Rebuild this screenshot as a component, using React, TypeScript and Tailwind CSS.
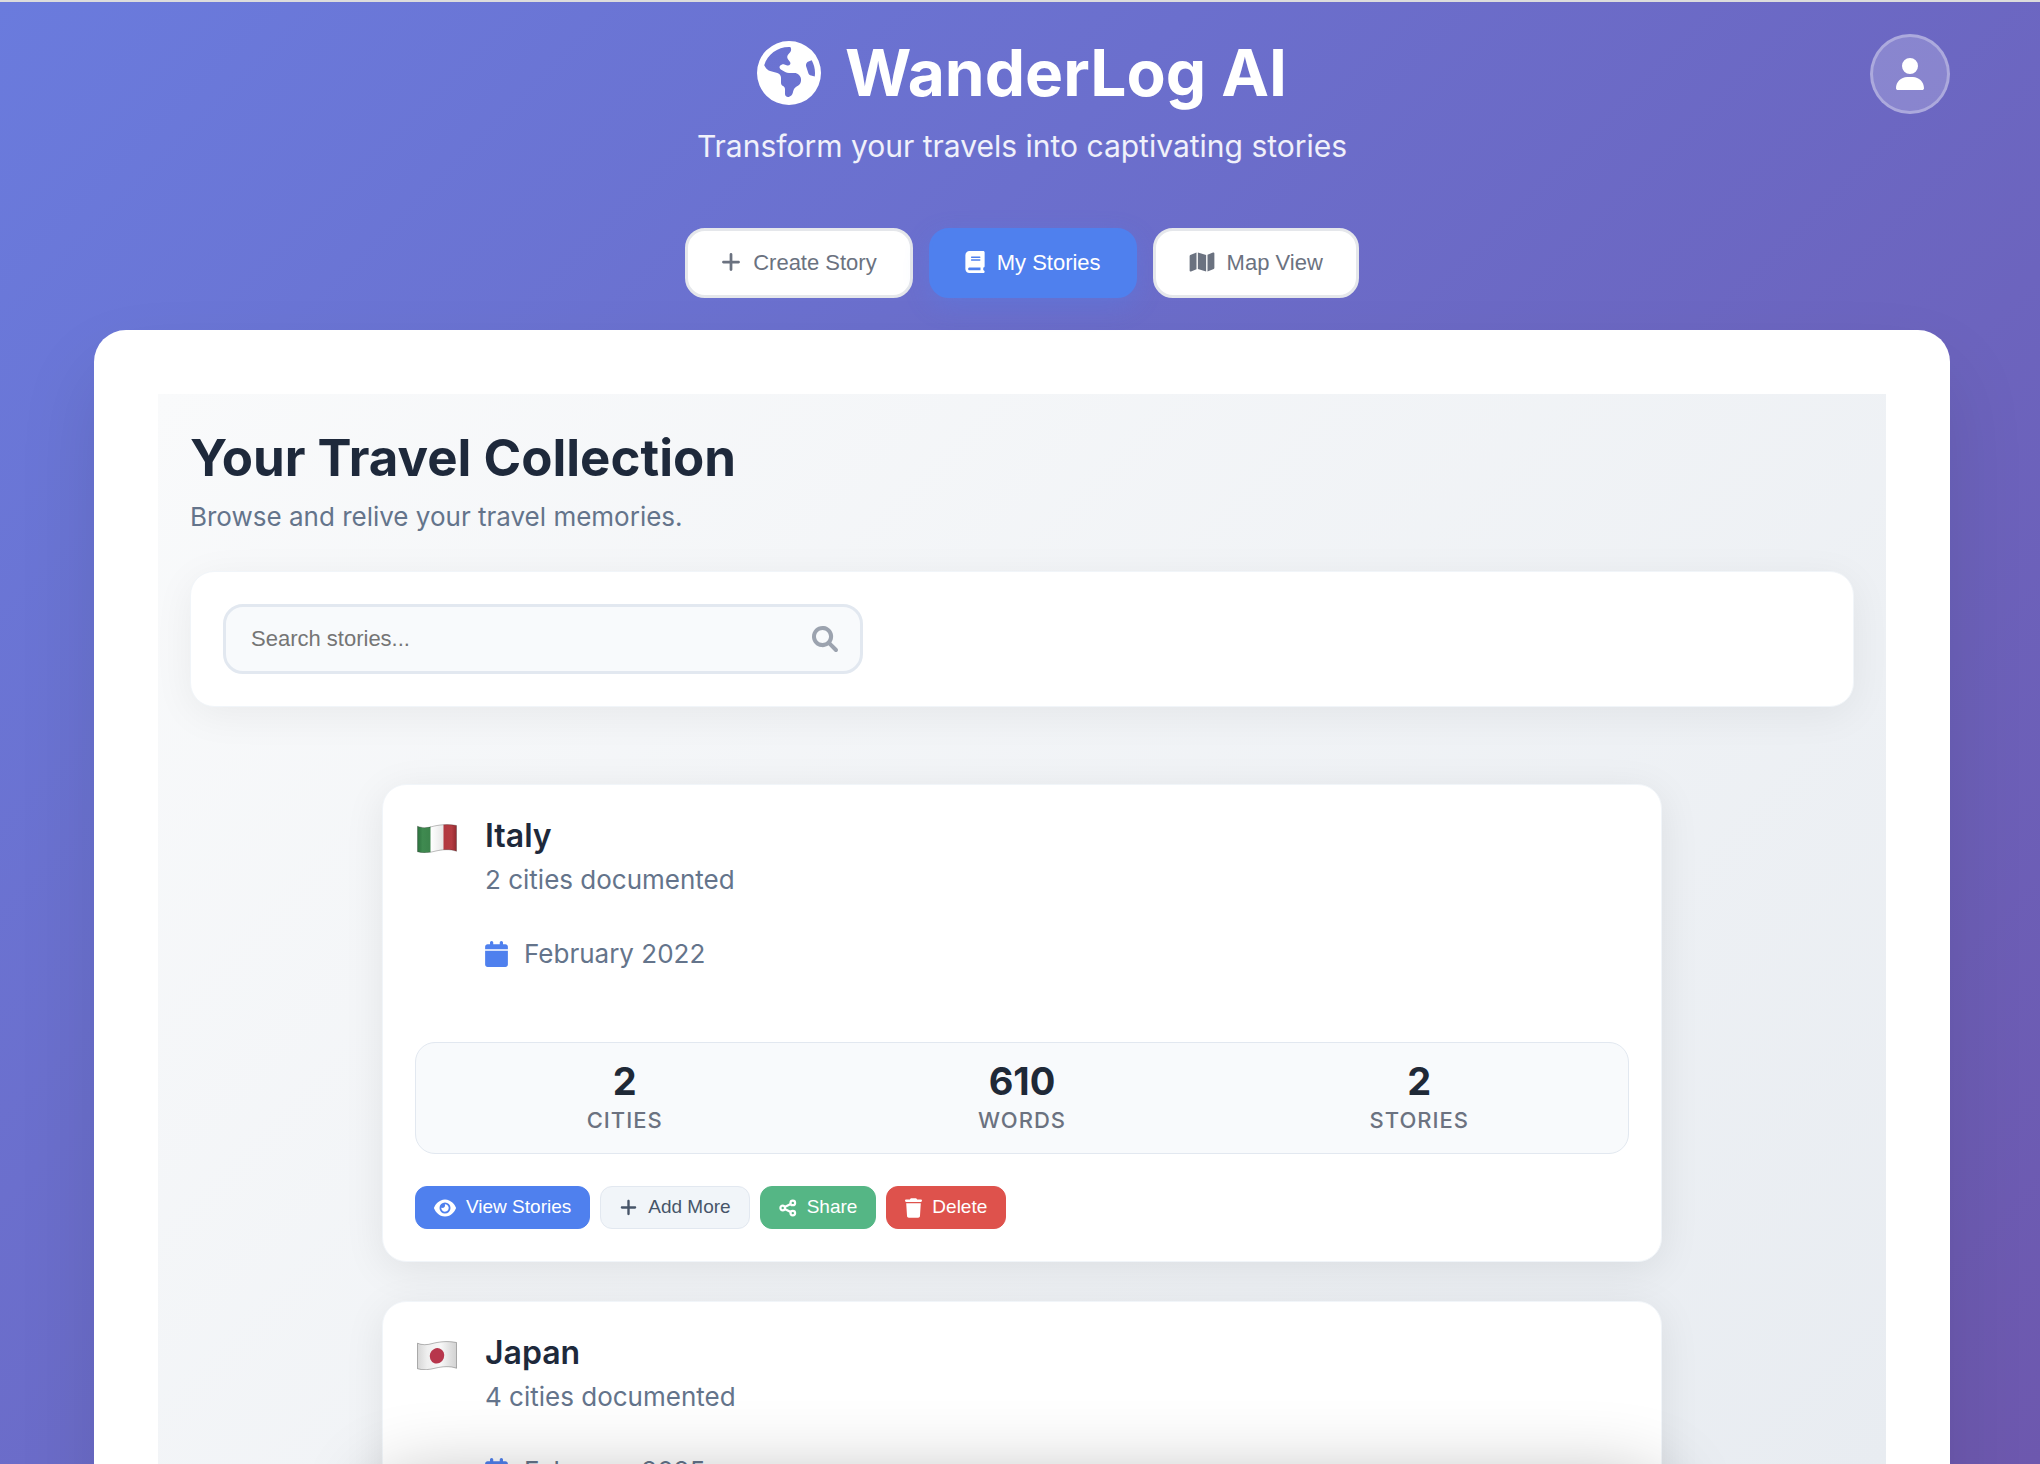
import {
  FaEarthAmericas,
  FaPlus,
  FaBook,
  FaMap,
  FaUser,
  FaCalendar,
  FaEye,
  FaTrash,
} from "react-icons/fa6";

function SearchIcon({ className }: { className?: string }) {
  return (
    <svg viewBox="0 0 512 512" fill="currentColor" className={className} aria-hidden="true">
      <path d="M500.3 443.7l-119.7-119.7c27.22-40.41 40.65-90.9 33.46-144.7C401.8 87.79 326.8 13.32 235.2 1.723C99.01-15.51-15.51 99.01 1.724 235.2c11.6 91.64 86.08 166.7 177.6 178.9c53.8 7.189 104.3-6.236 144.7-33.46l119.7 119.7c15.62 15.62 40.95 15.62 56.57 0C515.9 484.7 515.9 459.3 500.3 443.7zM79.1 208c0-70.58 57.42-128 128-128s128 57.42 128 128c0 70.58-57.42 128-128 128S79.1 278.6 79.1 208z" />
    </svg>
  );
}

function ShareIcon({ className }: { className?: string }) {
  return (
    <svg viewBox="0 0 18 18" fill="none" stroke="currentColor" strokeWidth="2.2" className={className} aria-hidden="true">
      <circle cx="3.7" cy="9" r="2.3" />
      <circle cx="13.8" cy="3.9" r="2.3" />
      <circle cx="13.8" cy="14.1" r="2.3" />
      <path d="M5.7 8 L11.7 4.9 M5.7 10 L11.7 13.1" />
    </svg>
  );
}

const flagOutline =
  "M0.5 2.2 C5 4.2 10 4 15 2.6 C21 1 30 -0.4 39.5 1.5 V27.3 C33 24.8 25 25.6 19 27 C12 28.8 6 29.4 0.5 27.8 Z";

function ItalyFlag() {
  return (
    <svg viewBox="0 0 40 29" className="h-[29px] w-10" role="img" aria-label="Flag of Italy">
      <defs>
        <linearGradient id="it-g" x1="0" x2="1">
          <stop offset="0" stopColor="#2a6f3c" />
          <stop offset="0.4" stopColor="#3f8a50" />
          <stop offset="1" stopColor="#3b834b" />
        </linearGradient>
        <linearGradient id="it-w" x1="0" x2="1">
          <stop offset="0" stopColor="#ffffff" />
          <stop offset="1" stopColor="#e6e6e6" />
        </linearGradient>
        <linearGradient id="it-r" x1="0" x2="1">
          <stop offset="0" stopColor="#b23840" />
          <stop offset="0.6" stopColor="#b43c42" />
          <stop offset="1" stopColor="#8f282e" />
        </linearGradient>
        <clipPath id="it-c">
          <path d={flagOutline} />
        </clipPath>
      </defs>
      <g clipPath="url(#it-c)">
        <rect width="14" height="29" fill="url(#it-g)" />
        <rect x="13.5" width="13.5" height="29" fill="url(#it-w)" />
        <rect x="26.5" width="13.5" height="29" fill="url(#it-r)" />
      </g>
      <path d={flagOutline} fill="none" stroke="#000000" strokeOpacity="0.25" />
    </svg>
  );
}

function JapanFlag() {
  return (
    <svg viewBox="0 0 40 29" className="h-[29px] w-10" role="img" aria-label="Flag of Japan">
      <defs>
        <linearGradient id="jp-w" x1="0" x2="1">
          <stop offset="0" stopColor="#d6d6d6" />
          <stop offset="0.25" stopColor="#efefef" />
          <stop offset="0.6" stopColor="#f7f7f7" />
          <stop offset="0.85" stopColor="#dedede" />
          <stop offset="1" stopColor="#d2d2d2" />
        </linearGradient>
      </defs>
      <path d={flagOutline} fill="url(#jp-w)" stroke="#000000" strokeOpacity="0.28" />
      <ellipse cx="20" cy="14.8" rx="7.2" ry="7.8" transform="rotate(20 20 14.8)" fill="#b7364c" />
    </svg>
  );
}

type Trip = {
  country: string;
  cities: number;
  date: string;
  words: number;
  stories: number;
  flag: React.ReactNode;
};

const trips: Trip[] = [
  { country: "Italy", cities: 2, date: "February 2022", words: 610, stories: 2, flag: <ItalyFlag /> },
  { country: "Japan", cities: 4, date: "February 2025", words: 1240, stories: 4, flag: <JapanFlag /> },
];

function Stat({ value, label }: { value: number; label: string }) {
  return (
    <div className="flex flex-col items-center">
      <div className="text-[38px] leading-11 font-bold text-[#1f2937]">{value}</div>
      <div className="text-[22px] leading-[34px] font-medium tracking-[1px] text-[#6b7280] uppercase">{label}</div>
    </div>
  );
}

const actionBase =
  "flex h-[43px] items-center gap-2.5 rounded-xl border px-[18px] font-['Liberation_Sans',Arial,sans-serif] text-[19px]";

function TripCard({ trip }: { trip: Trip }) {
  return (
    <article className="rounded-3xl border border-[#f1f5f9] bg-white p-8 shadow-[0_8px_40px_rgba(0,0,0,0.08)]">
      <div className="flex gap-7">
        <div className="pt-[7px] pl-0.5">{trip.flag}</div>
        <div>
          <h2 className="text-[32px] leading-[38px] font-semibold text-[#1e293b]">{trip.country}</h2>
          <p className="mt-[5px] text-[26px] leading-10 text-[#64748b]">{trip.cities} cities documented</p>
          <div className="mt-[34px] flex items-center gap-4 text-[26px] leading-10 text-[#64748b]">
            <FaCalendar className="h-[26px] w-[23px] text-[#4f80ee]" />
            <span>{trip.date}</span>
          </div>
        </div>
      </div>
      <div className="mt-[68px] grid grid-cols-3 gap-3 rounded-[20px] border border-[#e2e8f0] bg-[#f8fafc] p-4">
        <Stat value={trip.cities} label="Cities" />
        <Stat value={trip.words} label="Words" />
        <Stat value={trip.stories} label="Stories" />
      </div>
      <div className="mt-8 flex gap-2.5">
        <button className={`${actionBase} border-[#4f80ee] bg-[#4f80ee] text-white`}>
          <FaEye className="size-[22px]" />
          View Stories
        </button>
        <button className={`${actionBase} border-[#e2e8f0] bg-[#f1f5f9] text-[#475569]`}>
          <FaPlus className="size-[19px]" />
          Add More
        </button>
        <button className={`${actionBase} border-[#55b685] bg-[#55b685] text-white`}>
          <ShareIcon className="size-[18px]" />
          Share
        </button>
        <button className={`${actionBase} border-[#de524c] bg-[#de524c] text-white`}>
          <FaTrash className="h-5 w-[17px]" />
          Delete
        </button>
      </div>
    </article>
  );
}

const tabBase =
  "flex h-[70px] items-center gap-3 rounded-[20px] border-[3px] px-[33px] pb-0.5 font-['Liberation_Sans',Arial,sans-serif] text-[22px]";

export default function App() {
  return (
    <div className="h-screen overflow-hidden border-t-2 border-[#dcdcdc] bg-[linear-gradient(135deg,#6a7bdd_0%,#6d58ae_100%)] pr-[90px] pl-[94px] font-[Inter,sans-serif]">
      <header className="relative pt-8 text-center">
        <h1 className="flex items-center justify-center gap-6 text-[64px] leading-[78px] font-bold text-white">
          <FaEarthAmericas className="size-16" />
          WanderLog AI
        </h1>
        <p className="mt-1 text-[30px] leading-[60px] font-normal text-white/90">
          Transform your travels into captivating stories
        </p>
        <button
          aria-label="Account"
          className="absolute top-8 right-0 flex size-20 items-center justify-center rounded-full border-[3px] border-white/30 bg-white/20 text-white"
        >
          <FaUser className="h-8 w-7" />
        </button>
      </header>

      <nav className="mt-[52px] flex justify-center gap-4">
        <button className={`${tabBase} border-[#e5e7eb] bg-white text-[#6b7280]`}>
          <FaPlus className="h-[22px] w-5" />
          Create Story
        </button>
        <button
          className={`${tabBase} border-[#4f80ee] bg-[#4f80ee] text-white shadow-[0_8px_24px_rgba(79,128,238,0.3)]`}
        >
          <FaBook className="h-[22px] w-5" />
          My Stories
        </button>
        <button className={`${tabBase} border-[#e5e7eb] bg-white text-[#6b7280]`}>
          <FaMap className="h-[22px] w-[26px]" />
          Map View
        </button>
      </nav>

      <main className="mt-8 rounded-[32px] bg-white p-16 shadow-[0_40px_80px_rgba(0,0,0,0.1)]">
        <div className="bg-[linear-gradient(135deg,#f9fafb_0px,#e8ecf1_1980px)] p-8">
          <h2 className="text-[51px] leading-16 font-bold text-[#1e293b]">Your Travel Collection</h2>
          <p className="mt-[7px] text-[26px] leading-10 text-[#64748b]">Browse and relive your travel memories.</p>
          <div className="mt-[34px] rounded-3xl border border-[#f1f5f9] bg-white p-8 shadow-[0_8px_40px_rgba(0,0,0,0.06)]">
            <div className="relative max-w-[640px]">
              <input
                type="search"
                aria-label="Search stories"
                placeholder="Search stories..."
                className="block h-[70px] w-full rounded-[20px] border-[3px] border-[#e2e8f0] bg-[#f8fafc] px-[25px] font-['Liberation_Sans',Arial,sans-serif] text-[22px] placeholder:text-[#757575]"
              />
              <SearchIcon className="absolute top-[22px] right-[25px] size-[26px] text-[#9ca3af]" />
            </div>
          </div>
          <section className="mx-auto mt-[77px] flex max-w-[1280px] flex-col gap-[39px]">
            {trips.map((trip) => (
              <TripCard key={trip.country} trip={trip} />
            ))}
          </section>
        </div>
      </main>
      <div className="pointer-events-none fixed inset-x-0 top-full flex justify-center pt-5">
        <div className="h-[400px] w-full max-w-[1280px] rounded-3xl shadow-[0_0_80px_rgba(0,0,0,0.32)]" />
      </div>
    </div>
  );
}
